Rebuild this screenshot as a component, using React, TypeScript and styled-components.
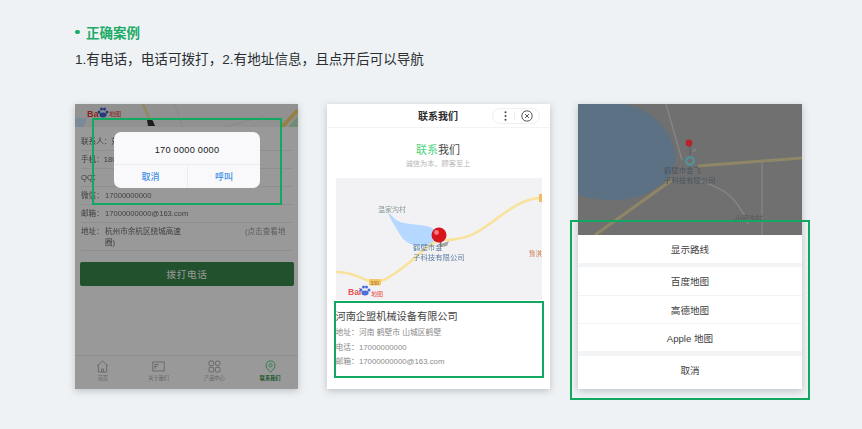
import React from "react";
import styled, { createGlobalStyle } from "styled-components";

const Global = createGlobalStyle`
  html, body { margin: 0; padding: 0; background: #eff2f4; }
  body { font-family: "Liberation Sans", "Noto Sans CJK SC", sans-serif; }
  * { box-sizing: border-box; }
`;
const Page = styled.div`
  width: 862px; height: 429px; overflow: hidden; padding: 23px 0 0 75px; background: #eff2f4;
`;
const Heading = styled.div`
  display: flex; align-items: center; gap: 6.5px; height: 18px;
  color: #1bab68; font-size: 13.5px; font-weight: 700;
  &::before { content: ""; width: 4.5px; height: 4.5px; border-radius: 50%; background: #1bab68; }
`;
const Lead = styled.div`
  margin-top: 9px; height: 20px; line-height: 20px; font-size: 13.6px; color: #2b2f33; white-space: nowrap;
`;
const Phones = styled.div`
  display: flex; gap: 28.5px; margin-top: 34px;
`;
const Phone = styled.div<{ $w?: number }>`
  position: relative; width: ${p => p.$w ?? 223}px; height: 285px; background: #fff;
  box-shadow: 0 2px 7px rgba(60, 70, 80, .28); display: flex; flex-direction: column;
`;
const Scrim = styled.div`
  position: absolute; inset: 0; background: rgba(0,0,0,.4);
`;
const Highlight = styled.div<{ $l: number; $t: number; $w: number; $h: number }>`
  position: absolute; left: ${p => p.$l}px; top: ${p => p.$t}px; width: ${p => p.$w}px; height: ${p => p.$h}px;
  border: 2.5px solid #12a862; z-index: 5;
`;
const MapSvg = styled.svg`
  display: block; flex: none; filter: blur(.4px);
`;
const Rows = styled.div`
  padding: 6px 5px 0 6px; filter: blur(.25px);
`;
const Row = styled.div<{ $h?: number }>`
  display: flex; align-items: ${p => (p.$h ? "flex-start" : "center")}; height: ${p => p.$h ?? 18}px;
  padding-top: ${p => (p.$h ? 3 : 0)}px;
  font-size: 7.6px; color: #6b6b6b; border-bottom: 1px solid #eee; line-height: 11px;
`;
const RowLabel = styled.span`
  flex: none; width: 24px;
`;
const RowValue = styled.span`
  flex: 1; max-width: 140px; margin-right: auto;
`;
const RowHint = styled.span`
  flex: none; width: 48px; color: #9b9b9b; white-space: nowrap;
`;
const CallButton = styled.div`
  margin: 11px 4px 0 5px; height: 24px; border-radius: 2px; background: #38884c;
  color: #fff; font-size: 9.6px; letter-spacing: .6px;
  display: flex; align-items: center; justify-content: center;
`;
const Tabs = styled.div`
  margin-top: auto; height: 34px; display: grid; grid-template-columns: repeat(4, 1fr);
  border-top: 1px solid #eee; padding-top: 4px;
`;
const Tab = styled.div<{ $on?: boolean }>`
  display: flex; flex-direction: column; align-items: center; gap: 1px;
  font-size: 5.2px; line-height: 8px; font-weight: ${p => (p.$on ? 700 : 400)};
  color: ${p => (p.$on ? "#2f8f4a" : "#a6a6a6")};
  svg { display: block; }
`;
const Dialog = styled.div`
  position: absolute; left: 39px; top: 28px; width: 146px; height: 56px;
  background: #f9f9fb; border-radius: 7px; display: flex; flex-direction: column; overflow: hidden;
`;
const DialogText = styled.div`
  flex: 1; display: flex; align-items: center; justify-content: center;
  font-size: 9.2px; color: #222; letter-spacing: .25px; padding-top: 3px;
`;
const DialogActions = styled.div`
  display: grid; grid-template-columns: 73px 1fr; height: 24px; border-top: 1px solid #ededf0;
`;
const DialogAction = styled.div`
  display: flex; align-items: center; justify-content: center;
  font-size: 9px; font-weight: 500; color: #3f8fe8;
  & + & { border-left: 1px solid #ededf0; }
`;
const NavBar = styled.div`
  position: relative; height: 24px; flex: none; display: flex; align-items: center; justify-content: center;
  border-bottom: 1px solid #f3f3f3; font-size: 10px; font-weight: 700; color: #2a2a2a;
`;
const Capsule = styled.div`
  position: absolute; left: 165.5px; top: 4px; width: 48px; height: 16px; border: 1px solid #f0f0f0; border-radius: 8px;
  display: flex; align-items: center; justify-content: space-between; padding: 0 6px 0 11px;
  svg { display: block; }
`;
const CapsuleDivider = styled.span`
  width: 1px; height: 9px; background: #ececec;
`;
const Title = styled.div`
  margin-top: 15px; text-align: center; font-size: 11px; line-height: 14px; color: #444;
`;
const TitleAccent = styled.span`
  color: #4fd37f;
`;
const Subtitle = styled.div`
  margin-top: 2px; text-align: center; font-size: 7.2px; line-height: 10px; color: #b5b5b5;
`;
const MapFrame = styled.div`
  margin: 9px 8px 0 9px; height: 122px;
`;
const Info = styled.div`
  padding: 10px 0 0 9px;
`;
const Company = styled.div`
  font-size: 10.2px; line-height: 14px; color: #444;
`;
const InfoLine = styled.div`
  margin-top: 3px; font-size: 7.8px; line-height: 11.5px; color: #8a8a8a;
  &:first-of-type { margin-top: 6px; }
`;
const MapFill = styled.div`
  position: relative; flex: 1; min-height: 0; overflow: hidden;
`;
const Sheet = styled.div`
  flex: none; background: #f3f4f5; border-radius: 5px 5px 0 0; position: relative; display: flex; flex-direction: column;
`;
const SheetGroup = styled.div<{ $gap: number }>`
  margin-top: ${p => p.$gap}px; display: flex; flex-direction: column; background: #fff;
`;
const SheetItem = styled.div<{ $h?: number }>`
  height: ${p => p.$h ?? 28}px; display: flex; align-items: center; justify-content: center;
  font-size: 9.6px; color: #3d3d3d; background: #fff;
  & + & { border-top: 1px solid #f3f3f3; }
`;
const SheetHead = styled(SheetItem)`
  border-radius: 5px 5px 0 0;
`;
const SheetCancel = styled(SheetItem)`
  padding-bottom: 5px;
`;

const Paw = ({ x, y, c = "#3f5fd0" }: { x: number; y: number; c?: string }) => (
  <g fill={c}>
    <circle cx={x - 4} cy={y - 1} r="1.5" /><circle cx={x - 1.5} cy={y - 4} r="1.5" />
    <circle cx={x + 1.5} cy={y - 4} r="1.5" /><circle cx={x + 4} cy={y - 1} r="1.5" />
    <ellipse cx={x} cy={y + 2} rx="3.6" ry="2.4" />
  </g>
);

const PhoneOneMap = () => (
  <MapSvg width="223" height="23" viewBox="0 0 223 23">
    <rect width="223" height="23" fill="#f2f2f4" />
    <path d="M0 14H12L9 23H0Z" fill="#cfe4fb" />
    <path d="M68 0L74 14" stroke="#f8e39b" strokeWidth="2.5" fill="none" />
    <path d="M223 6L207 23" stroke="#f8d775" strokeWidth="4" fill="none" />
    <path d="M213 23L223 12V23Z" fill="#bfe8c2" />
    <path d="M100 0L107 23M150 23L190 12" stroke="#e5e5ea" fill="none" />
    <text x="12" y="13" fontSize="9" fill="#e03a2e" fontWeight="700" fontFamily="Liberation Sans">Ba</text>
    <Paw x={28} y={9} />
    <text x="34" y="12" fontSize="6" fill="#e03a2e" fontFamily="Noto Sans CJK SC">地图</text>
    <path d="M72 16l3-2 3 3 2 5h-7z" fill="#333" />
  </MapSvg>
);

const HomeIcon = () => (
  <svg width="13" height="13" viewBox="0 0 13 13" fill="none" stroke="#a0a0a0" strokeWidth=".8">
    <path d="M1 6L6.5 1 12 6M2.3 5v7h8.4V5M5.5 12V9h2v3" />
  </svg>
);
const AboutIcon = () => (
  <svg width="13" height="13" viewBox="0 0 13 13" fill="none" stroke="#a0a0a0" strokeWidth=".8">
    <rect x=".8" y="2" width="11.4" height="9" /><path d="M3 4.5h4M3 4.5V9M3 6.5h2.5" />
  </svg>
);
const GridIcon = () => (
  <svg width="13" height="13" viewBox="0 0 13 13" fill="none" stroke="#a0a0a0" strokeWidth=".8">
    <rect x="1" y="1" width="4.6" height="4.6" rx="1" /><circle cx="9.7" cy="3.3" r="2.4" />
    <rect x="1" y="7.4" width="4.6" height="4.6" rx="1" /><rect x="7.4" y="7.4" width="4.6" height="4.6" rx="1" />
  </svg>
);
const PinIcon = () => (
  <svg width="13" height="13" viewBox="0 0 13 13" fill="none" stroke="#4fd37f" strokeWidth="1">
    <path d="M6.5 12.3C3.5 9.5 2 7.6 2 5.4a4.5 4.5 0 0 1 9 0c0 2.2-1.5 4.1-4.5 6.9Z" />
    <circle cx="6.5" cy="5.3" r="1.6" />
  </svg>
);

const PhoneTwoMap = () => (
  <MapSvg width="206" height="122" viewBox="0 0 206 122">
    <rect width="206" height="122" fill="#f2f2f5" />
    <path d="M52 35C55 43 60 50 65 58C70 66 80 69 90 68C98 67 102 64 102 58C101 51 94 48 84 47C76 46 68 46 62 43C58 41 56 37 52 35Z" fill="#b4d8ff" />
    <path d="M0 94C12 94 20 97 30 102C36 104 44 104 50 101C62 94 72 86 82 77C90 70 98 62 108 62C122 62 134 60 146 51C160 42 172 31 185 25C192 22 198 20 205 20" stroke="#f8e29c" strokeWidth="2.6" fill="none" />
    <rect x="203" y="16" width="3" height="8" fill="#f4b95f" />
    <rect x="33" y="101" width="12" height="6.5" rx="1" fill="#f4c668" />
    <text x="34.5" y="106.5" fontSize="5" fill="#9a6a20" fontFamily="Liberation Sans">330</text>
    <text x="42" y="34" fontSize="7" fill="#8a9a9a" fontFamily="Noto Sans CJK SC">温家沟村</text>
    <text x="77" y="72" fontSize="7.4" fill="#5f7f9f" fontFamily="Noto Sans CJK SC">鹤壁市金</text>
    <text x="77" y="82" fontSize="7.4" fill="#5f7f9f" fontFamily="Noto Sans CJK SC">子科技有限公司</text>
    <text x="193" y="78" fontSize="6.4" fill="#d0805a" fontFamily="Noto Sans CJK SC">豫淇</text>
    <path d="M103 60l1.6 12 1.4-12Z" fill="#777" />
    <path d="M105 66l8-3-2 5-6 1Z" fill="#888" opacity=".7" />
    <circle cx="103" cy="57" r="7.5" fill="#d8141c" />
    <circle cx="100.5" cy="54.5" r="2.4" fill="#f47a80" />
    <text x="12" y="117" fontSize="8.5" fill="#e8504a" fontWeight="700" fontFamily="Liberation Sans">Bai</text>
    <Paw x={29} y={113} c="#4a6fd8" />
    <text x="35" y="118" fontSize="6" fill="#e8504a" fontFamily="Noto Sans CJK SC">地图</text>
  </MapSvg>
);

const PhoneThreeMap = () => (
  <MapSvg width="224" height="131" viewBox="0 0 224 131">
    <rect width="224" height="131" fill="#707070" />
    <path d="M0 0H47C80 8 96 30 98 56C94 76 74 92 44 96C26 97 10 94 0 91Z" fill="#5c7183" />
    <path d="M17 131L94 76M120 62L224 54" stroke="#8f8668" strokeWidth="3" fill="none" />
    <path d="M88 0L104 56M118 76C130 80 146 84 156 96C164 106 168 112 170 120M184 56V131" stroke="#868686" strokeWidth="1.3" fill="none" />
    <circle cx="112" cy="57" r="3.8" fill="none" stroke="#4f95a2" strokeWidth="2" />
    <path d="M111.6 42v9h1v-9Z" fill="#5c5c5c" />
    <path d="M113 47l6-4-2 5Z" fill="#7d7d7d" />
    <circle cx="111" cy="39" r="3.4" fill="#b4242a" />
    <text x="86" y="68.5" fontSize="7.4" fill="#4a5560" fontFamily="Noto Sans CJK SC">鹤壁市金飞</text>
    <text x="86" y="79" fontSize="7.4" fill="#4a5560" fontFamily="Noto Sans CJK SC">子科技有限公司</text>
    <text x="157" y="117" fontSize="7" fill="#555" fontFamily="Noto Sans CJK SC">小寨沟村</text>
  </MapSvg>
);

export default function App() {
  return (
    <Page>
      <Global />
      <Heading>正确案例</Heading>
      <Lead>1.有电话，电话可拨打，2.有地址信息，且点开后可以导航</Lead>
      <Phones>
        <Phone>
          <PhoneOneMap />
          <Rows>
            <Row>联系人：刘</Row>
            <Row>手机：18000000000</Row>
            <Row>QQ：</Row>
            <Row><RowLabel>微信：</RowLabel>17000000000</Row>
            <Row><RowLabel>邮箱：</RowLabel>17000000000@163.com</Row>
            <Row $h={28}>
              <RowLabel>地址：</RowLabel>
              <RowValue>杭州市余杭区绕城高速<br />圈)</RowValue>
              <RowHint>(点击查看地</RowHint>
            </Row>
          </Rows>
          <CallButton>拨打电话</CallButton>
          <Tabs>
            <Tab><HomeIcon />首页</Tab>
            <Tab><AboutIcon />关于我们</Tab>
            <Tab><GridIcon />产品中心</Tab>
            <Tab $on><PinIcon />联系我们</Tab>
          </Tabs>
          <Scrim />
          <Dialog>
            <DialogText>170 0000 0000</DialogText>
            <DialogActions>
              <DialogAction>取消</DialogAction>
              <DialogAction>呼叫</DialogAction>
            </DialogActions>
          </Dialog>
          <Highlight $l={17} $t={14} $w={190} $h={87} />
        </Phone>

        <Phone>
          <NavBar>
            联系我们
            <Capsule>
              <svg width="3" height="10" viewBox="0 0 3 10" fill="#444">
                <circle cx="1.5" cy="1.2" r="1" /><circle cx="1.5" cy="5" r="1" /><circle cx="1.5" cy="8.8" r="1" />
              </svg>
              <CapsuleDivider />
              <svg width="12" height="12" viewBox="0 0 12 12" fill="none" stroke="#444" strokeWidth=".9">
                <circle cx="6" cy="6" r="5.2" /><path d="M4 4l4 4M8 4l-4 4" />
              </svg>
            </Capsule>
          </NavBar>
          <Title><TitleAccent>联系</TitleAccent>我们</Title>
          <Subtitle>诚信为本、顾客至上</Subtitle>
          <MapFrame><PhoneTwoMap /></MapFrame>
          <Info>
            <Company>河南企盟机械设备有限公司</Company>
            <InfoLine>地址：河南 鹤壁市 山城区鹤壁</InfoLine>
            <InfoLine>电话：17000000000</InfoLine>
            <InfoLine>邮箱：17000000000@163.com</InfoLine>
          </Info>
          <Highlight $l={7} $t={197} $w={210} $h={77} />
        </Phone>

        <Phone $w={224}>
          <MapFill><PhoneThreeMap /></MapFill>
          <Sheet>
            <SheetHead $h={28}>显示路线</SheetHead>
            <SheetGroup $gap={4}>
              <SheetItem>百度地图</SheetItem>
              <SheetItem>高德地图</SheetItem>
              <SheetItem>Apple 地图</SheetItem>
            </SheetGroup>
            <SheetGroup $gap={5}>
              <SheetCancel $h={33}>取消</SheetCancel>
            </SheetGroup>
          </Sheet>
          <Highlight $l={-8} $t={116} $w={240} $h={180} />
        </Phone>
      </Phones>
    </Page>
  );
}
